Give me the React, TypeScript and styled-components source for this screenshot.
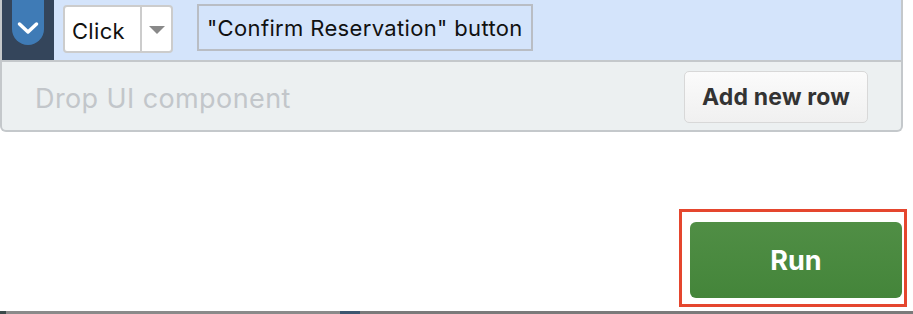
import styled, { createGlobalStyle } from "styled-components";

const GlobalStyle = createGlobalStyle`
  html, body {
    margin: 0;
    padding: 0;
    background: #ffffff;
    font-family: Inter, "Liberation Sans", Arial, sans-serif;
  }
`;

const Page = styled.div`
  width: 913px;
  height: 314px;
  display: flex;
  flex-direction: column;
  overflow: hidden;
`;

const Panel = styled.div`
  width: 899px;
  border: 2px solid #c4c8cb;
  border-top: none;
  border-radius: 0 0 6px 6px;
  overflow: hidden;
  background: #ecf0f1;
`;

const StepRow = styled.div`
  height: 60px;
  display: flex;
  align-items: stretch;
  background: #d4e4fb;
  border-bottom: 2px solid #c4c8cb;
`;

const Handle = styled.div`
  width: 52px;
  background: #34455b;
  display: flex;
  justify-content: center;
`;

const Pill = styled.div`
  width: 32px;
  height: 45px;
  background: #3f7bb6;
  border-radius: 0 0 16px 16px;
  display: flex;
  align-items: flex-end;
  justify-content: center;
  padding-bottom: 10px;
  box-sizing: border-box;
`;

const Controls = styled.div`
  display: flex;
  align-items: flex-start;
  gap: 24px;
  padding: 5px 0 0 9px;
`;

const Select = styled.div`
  width: 110px;
  height: 48px;
  box-sizing: border-box;
  border: 2px solid #cccccc;
  border-radius: 4px;
  background: #ffffff;
  display: flex;
`;

const SelectLabel = styled.div`
  width: 68px;
  border-right: 2px solid #cccccc;
  display: flex;
  align-items: center;
  padding-left: 7px;
  padding-top: 3px;
  font-size: 22px;
  letter-spacing: 0.3px;
  color: #111111;
`;

const SelectArrow = styled.div`
  flex: 1;
  display: flex;
  align-items: center;
  justify-content: center;
  padding-top: 2px;
`;

const Target = styled.div`
  height: 47px;
  margin-top: -1px;
  box-sizing: border-box;
  padding: 1px 8px 0;
  border: 2px solid #b9bdc4;
  display: flex;
  align-items: center;
  font-size: 22px;
  letter-spacing: 0.35px;
  color: #111111;
`;

const DropRow = styled.div`
  height: 68px;
  display: flex;
  align-items: center;
  justify-content: space-between;
  padding: 0 33px 0 33px;
`;

const DropHint = styled.span`
  font-size: 27px;
  letter-spacing: 0.4px;
  color: #c2c6ca;
  margin-top: 4px;
`;

const AddButton = styled.button`
  width: 184px;
  height: 52px;
  margin-top: 2px;
  border: 1px solid #d8d8d8;
  border-radius: 5px;
  background: linear-gradient(#fbfbfb, #f0f0f0);
  font-family: Inter, "Liberation Sans", Arial, sans-serif;
  font-weight: 700;
  font-size: 23px;
  letter-spacing: 0.2px;
  color: #333333;
`;

const Footer = styled.div`
  display: flex;
  justify-content: flex-end;
  padding-right: 6px;
  margin-top: 77px;
`;

const Highlight = styled.div`
  border: 3px solid #e5462e;
  padding: 10px 2px 6px 8px;
`;

const RunButton = styled.button`
  width: 212px;
  height: 76px;
  border: none;
  border-radius: 6px;
  background: linear-gradient(#508e45, #44853a);
  color: #ffffff;
  font-family: Inter, "Liberation Sans", Arial, sans-serif;
  font-weight: 700;
  font-size: 27px;
`;

const Strip = styled.div`
  margin-top: auto;
  height: 3px;
  background: linear-gradient(90deg, #3a4a4a 0 6px, #8a8a8a 6px 340px, #3c5670 340px 360px, #7a7a7a 360px);
`;

export default function App() {
  return (
    <Page>
      <GlobalStyle />
      <Panel>
        <StepRow>
          <Handle>
            <Pill>
              <svg width="24" height="14" viewBox="0 0 24 14">
                <path
                  d="M3.5 3 L12 11 L20.5 3"
                  fill="none"
                  stroke="#ffffff"
                  strokeWidth="3.5"
                  strokeLinecap="round"
                  strokeLinejoin="round"
                />
              </svg>
            </Pill>
          </Handle>
          <Controls>
            <Select>
              <SelectLabel>Click</SelectLabel>
              <SelectArrow>
                <svg width="18" height="10" viewBox="0 0 18 10">
                  <path d="M1 1 L17 1 L9 9 Z" fill="#898989" />
                </svg>
              </SelectArrow>
            </Select>
            <Target>"Confirm Reservation" button</Target>
          </Controls>
        </StepRow>
        <DropRow>
          <DropHint>Drop UI component</DropHint>
          <AddButton>Add new row</AddButton>
        </DropRow>
      </Panel>
      <Footer>
        <Highlight>
          <RunButton>Run</RunButton>
        </Highlight>
      </Footer>
      <Strip />
    </Page>
  );
}
